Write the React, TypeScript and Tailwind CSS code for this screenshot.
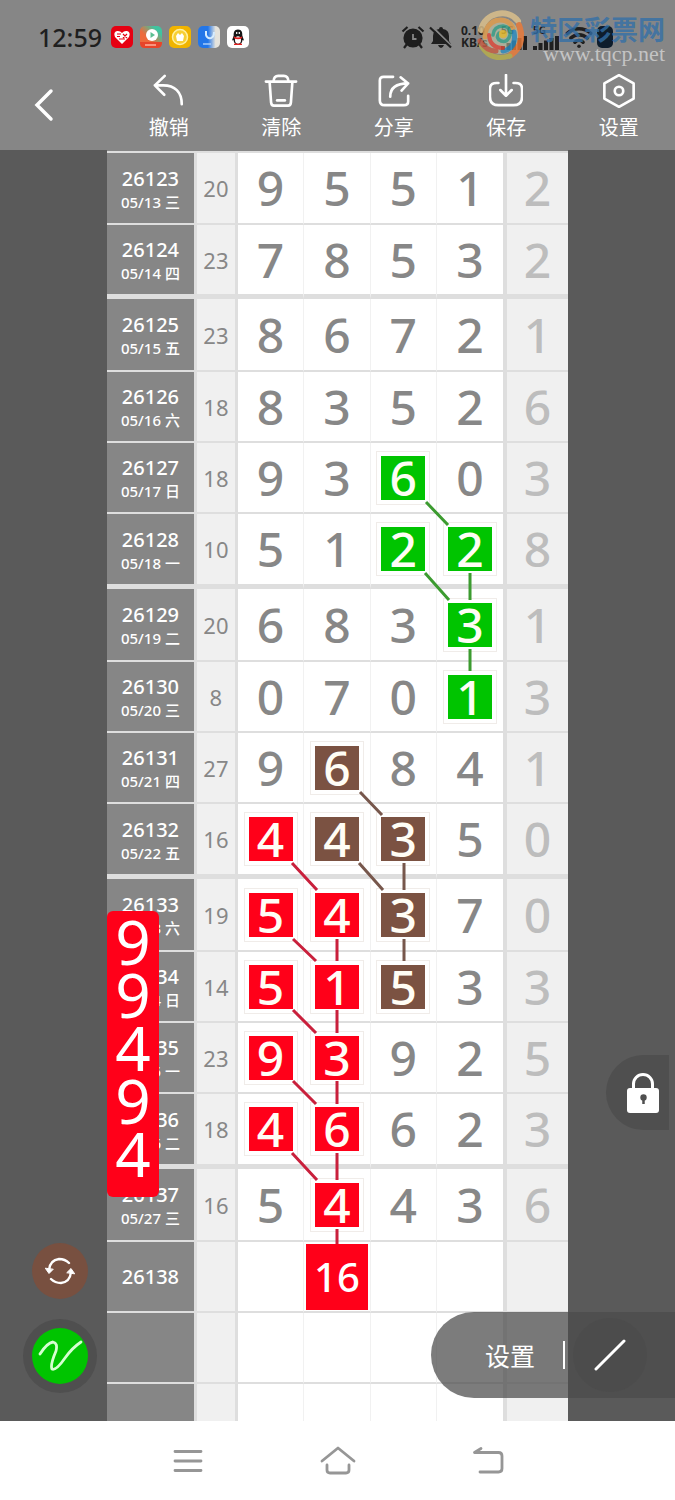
import { Wifi } from 'lucide-react';
import type { ReactNode } from 'react';

type Mark = 'g' | 'b' | 'r';

type Row = {
  id: string;
  date: string;
  sum: string;
  nums: string[];
  last: string;
  marks?: (Mark | '')[];
};

const rows: Row[] = [
  { id: '26123', date: '05/13 三', sum: '20', nums: ['9', '5', '5', '1'], last: '2' },
  { id: '26124', date: '05/14 四', sum: '23', nums: ['7', '8', '5', '3'], last: '2' },
  { id: '26125', date: '05/15 五', sum: '23', nums: ['8', '6', '7', '2'], last: '1' },
  { id: '26126', date: '05/16 六', sum: '18', nums: ['8', '3', '5', '2'], last: '6' },
  { id: '26127', date: '05/17 日', sum: '18', nums: ['9', '3', '6', '0'], last: '3', marks: ['', '', 'g', ''] },
  { id: '26128', date: '05/18 一', sum: '10', nums: ['5', '1', '2', '2'], last: '8', marks: ['', '', 'g', 'g'] },
  { id: '26129', date: '05/19 二', sum: '20', nums: ['6', '8', '3', '3'], last: '1', marks: ['', '', '', 'g'] },
  { id: '26130', date: '05/20 三', sum: '8', nums: ['0', '7', '0', '1'], last: '3', marks: ['', '', '', 'g'] },
  { id: '26131', date: '05/21 四', sum: '27', nums: ['9', '6', '8', '4'], last: '1', marks: ['', 'b', '', ''] },
  { id: '26132', date: '05/22 五', sum: '16', nums: ['4', '4', '3', '5'], last: '0', marks: ['r', 'b', 'b', ''] },
  { id: '26133', date: '05/23 六', sum: '19', nums: ['5', '4', '3', '7'], last: '0', marks: ['r', 'r', 'b', ''] },
  { id: '26134', date: '05/24 日', sum: '14', nums: ['5', '1', '5', '3'], last: '3', marks: ['r', 'r', 'b', ''] },
  { id: '26135', date: '05/25 一', sum: '23', nums: ['9', '3', '9', '2'], last: '5', marks: ['r', 'r', '', ''] },
  { id: '26136', date: '05/26 二', sum: '18', nums: ['4', '6', '6', '2'], last: '3', marks: ['r', 'r', '', ''] },
  { id: '26137', date: '05/27 三', sum: '16', nums: ['5', '4', '4', '3'], last: '6', marks: ['', 'r', '', ''] },
  { id: '26138', date: '', sum: '', nums: ['', '16', '', ''], last: '', marks: ['', 'r', '', ''] },
  { id: '', date: '', sum: '', nums: ['', '', '', ''], last: '' },
  { id: '', date: '', sum: '', nums: ['', '', '', ''], last: '' },
];

const markBg = { g: 'bg-[#00c400]', b: 'bg-[#7b5242]', r: 'bg-[#ff0019]' };

// 连线坐标，以走势表左上角为原点
const links = [
  { color: '#3c9b30', d: 'M319 352l22 23M318 423l24 27M363 423v27M363 499v22' },
  { color: '#77574c', d: 'M253 642l22 23M252 713l24 27M297 713v27M297 789v22' },
  {
    color: '#c9203c',
    d: 'M185 713l25 27M186 789l23 22M186 860l23 23M186 931l23 23M185 1003l25 27M230 789v22M230 860v23M230 931v23M230 1003v27M230 1079v15',
  },
];

function Icon({ children, size = 'size-9' }: { children: ReactNode; size?: string }) {
  return (
    <svg viewBox="0 0 36 36" className={size} fill="none" stroke="currentColor" strokeWidth="2.8" strokeLinecap="round" strokeLinejoin="round" aria-hidden="true">
      {children}
    </svg>
  );
}

const tools = [
  { label: '撤销', icon: <path d="M13.500 2L3 12l10 10M3 12h9c12 0 19.500 7 19.500 20" /> },
  {
    label: '清除',
    icon: (
      <>
        <path d="M2 8h32M6 9l1.500 21q.3 3.500 3 3.500h15q2.700 0 3-3.500L30 9M10 8q.5-6 5-6h6q4.500 0 5 6" />
        <path d="M14 28h8" strokeWidth="3" />
      </>
    ),
  },
  { label: '分享', icon: <path d="M17 3H7Q3 3 3 7v21q0 5 5 5h20.500q4.500 0 4.500-4v-6M14 24q0-14 19-14M25 3.500L33 10l-7 7.500" /> },
  { label: '保存', icon: <path d="M10 9.500H8q-7 0-7 6V24q0 9 9 9h16q9 0 9-9v-8.500q0-6-7-6h-2M18 1v21M12 17l6 6 6-6" /> },
  {
    label: '设置',
    icon: (
      <>
        <path d="M18 1.200L33.500 10v16L18 34.800 2.500 26V10z" />
        <circle cx="18" cy="18" r="4.500" />
      </>
    ),
  },
];

function StatusBar() {
  return (
    <div className="flex h-[74px] items-center pl-[38px] text-[#1f1f1f]">
      <span className="text-[25px] leading-6 font-medium">12:59</span>
      <div className="ml-[9px] flex gap-[7px]">
        <svg viewBox="0 0 22 22" className="size-[22px]">
          <rect width="22" height="22" rx="5" fill="#e60012" />
          <path d="M11 18L4 11Q2 6 6 5q3-.5 5 2 2-2.500 5-2 4 1 2 6z" fill="#fff" />
          <path d="M6 8h4M6 10.500h3M12 8l4 4M16 8l-4 4M8 13h6" stroke="#e60012" strokeWidth="1.200" />
        </svg>
        <svg viewBox="0 0 22 22" className="size-[22px]">
          <defs>
            <linearGradient id="video" x1="0" y1="1" x2="1" y2="0">
              <stop offset=".4" stopColor="#ee6a3c" />
              <stop offset=".8" stopColor="#3fc4a0" />
            </linearGradient>
          </defs>
          <rect width="22" height="22" rx="5" fill="url(#video)" />
          <path d="M0 16h22v1q0 5-5 5H5q-5 0-5-5z" fill="#e8442a" />
          <circle cx="12" cy="9" r="6" fill="#fff" />
          <path d="M10.500 6l4.500 3-4.500 3z" fill="#5cbf92" />
          <path d="M5 19h11" stroke="#ffb09c" strokeWidth="1.500" />
        </svg>
        <svg viewBox="0 0 22 22" className="size-[22px]">
          <rect width="22" height="22" rx="5" fill="#f0b400" />
          <circle cx="11" cy="11" r="7.500" fill="#f7cf35" stroke="#fff0a0" strokeWidth="1.500" />
          <path d="M7 10l2-3 2 2 2-2 2 3-1 5H8z" fill="#fff" />
        </svg>
        <svg viewBox="0 0 22 22" className="size-[22px]">
          <defs>
            <linearGradient id="map">
              <stop offset=".45" stopColor="#2376e8" />
              <stop offset=".8" stopColor="#e5e3dc" />
            </linearGradient>
          </defs>
          <rect width="22" height="22" rx="5" fill="url(#map)" />
          <path d="M8 5v4q1 4 5 3 3-1 3-6" fill="none" stroke="#d5ecff" strokeWidth="2" />
          <path d="M5 18h8" stroke="#a9cdfa" strokeWidth="1.500" />
        </svg>
        <svg viewBox="0 0 22 22" className="size-[22px]">
          <rect width="22" height="22" rx="5" fill="#fff" />
          <path d="M11 3.500c-4 0-4.500 3.500-4.300 6L5 14.500l1.500-.5Q7 18.500 11 18.500t4.500-4.500l1.500.5-1.700-5c.2-2.500-.3-6-4.300-6z" fill="#161616" />
          <ellipse cx="11" cy="14" rx="3" ry="3.800" fill="#fff" />
          <path d="M7 10.500q4 2 8 0l.3 1.500q-4.300 2.500-8.600 0zM7 18q2-1.500 4 0 2-1.500 4 0v1H7z" fill="#e02020" />
          <path d="M9.700 6v2M12.300 6v2" stroke="#fff" strokeWidth="1.200" />
        </svg>
      </div>

      <div className="relative ml-auto flex h-full items-center pr-[62px]">
        <svg viewBox="0 0 24 24" className="size-6" fill="none" stroke="currentColor" strokeWidth="2.200">
          <circle cx="12" cy="13" r="8.500" fill="currentColor" />
          <path d="M1.500 6.500l5-4.500M22.500 6.500l-5-4.500M6 19l-3 4M18 19l3 4" />
          <path d="M12 9v5h3.500" stroke="#868686" strokeWidth="1.800" />
        </svg>
        <svg viewBox="0 0 24 24" className="ml-1 size-6">
          <path d="M12 2q2 0 2 2 6 1 6 7v5l2 3H2l2-3v-5q0-6 6-7 0-2 2-2zM9 20h6q-1 3-3 3t-3-3z" fill="currentColor" />
          <path d="M2.500 1l20 20" stroke="#868686" strokeWidth="2" />
          <path d="M1 2.500l21 20" stroke="currentColor" strokeWidth="2.200" />
        </svg>
        <span className="ml-2 w-[34px] text-[12px] leading-3 font-bold">0.10<br />KB/s</span>
        {[0, 1].map((n) => (
          <span key={n} className="ml-1.5 w-[26px] text-[10px] leading-[11px] font-bold">
            5G
            <svg viewBox="0 0 26 14" className="h-3.5 w-[26px]" fill="currentColor">
              <path d="M0 10h4v4H0zM5.500 7h4v7h-4zM11 4.500h4V14h-4zM16.500 2h4v12h-4zM22 0h4v14h-4z" />
            </svg>
          </span>
        ))}
        <Wifi className="ml-1.5 size-7" strokeWidth={3} />
        <span className="ml-1 h-[22px] w-4 rounded-[5px] bg-[#0e1d2c]" />

        {/* 站点水印 */}
        <div className="absolute top-2.5 right-2.5 flex items-start gap-1.5">
          <svg viewBox="0 0 48 52" className="h-[52px] w-12" fill="none" strokeLinecap="round" opacity=".8">
            <circle cx="25" cy="26" r="18" fill="#d9dcb0" opacity=".6" />
            <path d="M5 20C9 2 32-2 42 11" stroke="#dfc38b" strokeWidth="6" />
            <path d="M9 27C9 9 30 4 37 18" stroke="#e6a04c" strokeWidth="5" />
            <path d="M43 15q7 19-8 30" stroke="#ef7a35" strokeWidth="6" />
            <path d="M5 35q9 17 29 11" stroke="#b8b04a" strokeWidth="5" />
            <path d="M4 31q6 10 16 10" stroke="#c95c42" strokeWidth="5" />
            <path d="M38 22q3 16-11 19" stroke="#2d8fc4" strokeWidth="5" />
            <path d="M13 25q1 13 14 13" stroke="#e34b3a" strokeWidth="4" />
            <path d="M17 25q1-9 10-9 8 1 7 9-2 8-9 6-6-3-2-8" stroke="#3aa58c" strokeWidth="3.500" />
            <circle cx="27" cy="24" r="4" fill="#edc230" />
          </svg>
          <div className="flex flex-col items-end pt-1.5">
            <span className="text-[27px] leading-7 font-bold whitespace-nowrap text-[#326fa8]/80">特区彩票网</span>
            <span className="font-['Liberation_Serif',serif] text-[22px] leading-5 text-[#c4c4c4]">www.tqcp.net</span>
          </div>
        </div>
      </div>
    </div>
  );
}

function Toolbar() {
  return (
    <div className="grid h-[76px] grid-cols-6 text-white">
      <button aria-label="返回" className="flex justify-center pt-3.5 pr-6">
        <svg viewBox="0 0 20 34" className="h-[34px] w-5" fill="none" stroke="currentColor" strokeWidth="3.500" strokeLinecap="round">
          <path d="M17 3L3 17l14 14" />
        </svg>
      </button>
      {tools.map((t) => (
        <button key={t.label} className="flex flex-col items-center gap-2">
          <Icon size="size-[34px]">{t.icon}</Icon>
          <span className="text-xl leading-6 whitespace-nowrap">{t.label}</span>
        </button>
      ))}
    </div>
  );
}

function rowHeight(i: number) {
  if (i === rows.length - 1) return 'h-[37px]';
  if (i === 0) return 'h-[72px]';
  if (i === 1) return 'h-[74px]';
  if (i % 4 === 2) return 'h-[73px]';
  return i % 4 === 1 && i < 14 ? 'h-[75px]' : 'h-[71px]';
}

function rowLine(i: number) {
  if (i === rows.length - 1) return 'border-b-0';
  return i % 4 === 1 && i < 14 ? 'border-b-[5px]' : 'border-b-2';
}

function Num({ value, mark }: { value: string; mark?: Mark | '' }) {
  if (!value) return null;
  if (value.length > 1) {
    return (
      <span className="mx-auto flex h-[66px] w-[62px] items-center justify-center bg-[#ff0019] text-[40px] leading-none font-medium text-white">
        {value}
      </span>
    );
  }
  if (!mark) return <span className="block text-[48px] leading-[50px] font-medium">{value}</span>;
  return (
    <span className="mx-auto block size-[54px] border border-[#f0ece9] bg-white p-1">
      <span className={`block size-11 text-[48px] leading-[44px] font-medium text-[#fffdf5] ${markBg[mark]}`}>{value}</span>
    </span>
  );
}

function TrendTable() {
  return (
    <table className="w-full table-fixed border-separate border-spacing-0 border-t-2 border-[#dedede] text-center text-[#878787]">
      <colgroup>
        <col className="w-[19.500%]" />
        <col className="w-[8.900%]" />
        <col className="w-[14.400%]" />
        <col className="w-[14.400%]" />
        <col className="w-[14.400%]" />
        <col className="w-[15.200%]" />
        <col />
      </colgroup>
      <tbody>
        {rows.map((r, i) => (
          <tr key={i} className={rowHeight(i)}>
            <th scope="row" className={`border-r-[3px] border-[#dedede] bg-[#868686] p-0 font-medium text-white ${rowLine(i)}`}>
              <span className={`block text-xl leading-6 ${r.date ? 'pt-[3px]' : ''}`}>{r.id}</span>
              {r.date && <span className="block text-[15px] leading-[22px] whitespace-nowrap">{r.date}</span>}
            </th>
            <td className={`border-r-[3px] border-[#dedede] bg-[#f0f0f0] p-0 text-[22px] leading-6 ${rowLine(i)}`}>{r.sum}</td>
            {r.nums.map((n, j) => (
              <td key={j} className={`border-[#dedede] bg-white p-0 ${j === 3 ? 'border-r-4' : 'border-r border-r-[#f1f1f1]'} ${rowLine(i)}`}>
                <Num value={n} mark={r.marks?.[j]} />
              </td>
            ))}
            <td className={`border-[#dedede] bg-[#f0f0f0] p-0 text-[#bdbdbd] ${rowLine(i)}`}>
              <Num value={r.last} />
            </td>
          </tr>
        ))}
      </tbody>
    </table>
  );
}

export default function App() {
  return (
    <div className="w-full bg-white font-['Noto_Sans','Noto_Sans_CJK_SC',sans-serif]">
      <header className="bg-[#868686]">
        <StatusBar />
        <Toolbar />
      </header>

      <main className="relative bg-[#5a5a5a]">
        <div className="relative mx-auto w-[68.300%]">
          <div className="h-px bg-[#868686]" />
          <TrendTable />
          <svg viewBox="0 0 461 1271" preserveAspectRatio="none" className="pointer-events-none absolute inset-0 size-full" fill="none" strokeWidth="3">
            {links.map((l) => (
              <path key={l.color} d={l.d} stroke={l.color} />
            ))}
          </svg>
          {/* 悬浮的参考号码 */}
          <div className="absolute top-[761px] left-0 flex h-[286px] w-[52px] flex-col items-center rounded-md bg-[#ff0019] pt-1 text-[62px] leading-[53px] text-white">
            {['9', '9', '4', '9', '4'].map((n, i) => (
              <span key={i}>{n}</span>
            ))}
          </div>
        </div>

        <button aria-label="锁定" className="absolute right-1.5 bottom-[291px] flex h-[75px] w-[63px] items-center overflow-hidden rounded-l-full bg-[#4f4f4f] pl-[21px] text-white">
          <svg viewBox="0 0 32 40" className="h-10 w-8">
            <path d="M6.500 17v-6a9.500 9.500 0 0 1 19 0v6" fill="none" stroke="currentColor" strokeWidth="3" />
            <rect y="15" width="32" height="25" rx="3" fill="currentColor" />
            <circle cx="16.500" cy="24.500" r="3.200" fill="#4f4f4f" />
            <path d="M16.500 25v6" stroke="#4f4f4f" strokeWidth="2.500" />
          </svg>
        </button>

        <div className="absolute bottom-7 left-[23px] flex flex-col items-center gap-5">
          <button aria-label="切换颜色" className="flex size-14 items-center justify-center rounded-full bg-[#785040] text-white">
            <svg viewBox="0 0 32 32" className="size-8" fill="none" stroke="currentColor" strokeWidth="2.400" strokeLinecap="round">
              <path d="M5 15Q6 5 15 4q6 0 10 4M27 17q-1 10-10 11-6 0-10-4" />
              <path d="M1.500 13.500l3.500 5 4-4zM30.500 18.500l-3.500-5-4 4z" fill="currentColor" strokeWidth="1" />
            </svg>
          </button>
          <button aria-label="画笔" className="flex size-[74px] items-center justify-center rounded-full bg-[#4f4f4f]">
            <span className="flex size-14 items-center justify-center rounded-full bg-[#00c400]">
              <svg viewBox="0 0 46 32" className="h-8 w-[46px]" fill="none" stroke="#d5ffd0" strokeWidth="2.800" strokeLinecap="round" strokeLinejoin="round">
                <path d="M3 14Q10 3 16 2q5 1 3 9-6 14-4 18 4 2 13-11Q35 8 44 2" />
              </svg>
            </span>
          </button>
        </div>

        <div className="absolute right-0 bottom-[23px] flex h-[86px] w-[244px] items-center rounded-l-full bg-[#4b4b4b]/73 pl-[54px] text-white">
          <button className="pt-0.5 text-[25px] leading-8 whitespace-nowrap">设置</button>
          <span className="ml-7 h-7 w-0.5 bg-white" />
          <button aria-label="直线" className="ml-2 flex size-[74px] items-center justify-center rounded-full bg-[#484848]/40">
            <svg viewBox="0 0 32 32" className="size-8" stroke="currentColor" strokeWidth="3" strokeLinecap="round">
              <path d="M2 30L30 2" />
            </svg>
          </button>
        </div>
      </main>

      <nav className="mx-auto grid h-[79px] w-2/3 grid-cols-3 items-center justify-items-center text-[#969696]">
        <button aria-label="最近任务">
          <Icon>
            <path d="M5 8.500h26M5 18h26M5 27.500h26" />
          </Icon>
        </button>
        <button aria-label="主屏幕">
          <Icon>
            <path d="M2 18L18 5l16 13M7 22v5q0 3 3 3h16q3 0 3-3v-5" />
          </Icon>
        </button>
        <button aria-label="返回上一页">
          <Icon>
            <path d="M11 5.500L4.500 9.500h24q3.500 0 3.500 3.500v12.500q0 3.500-3.500 3.500H10" />
          </Icon>
        </button>
      </nav>
    </div>
  );
}
